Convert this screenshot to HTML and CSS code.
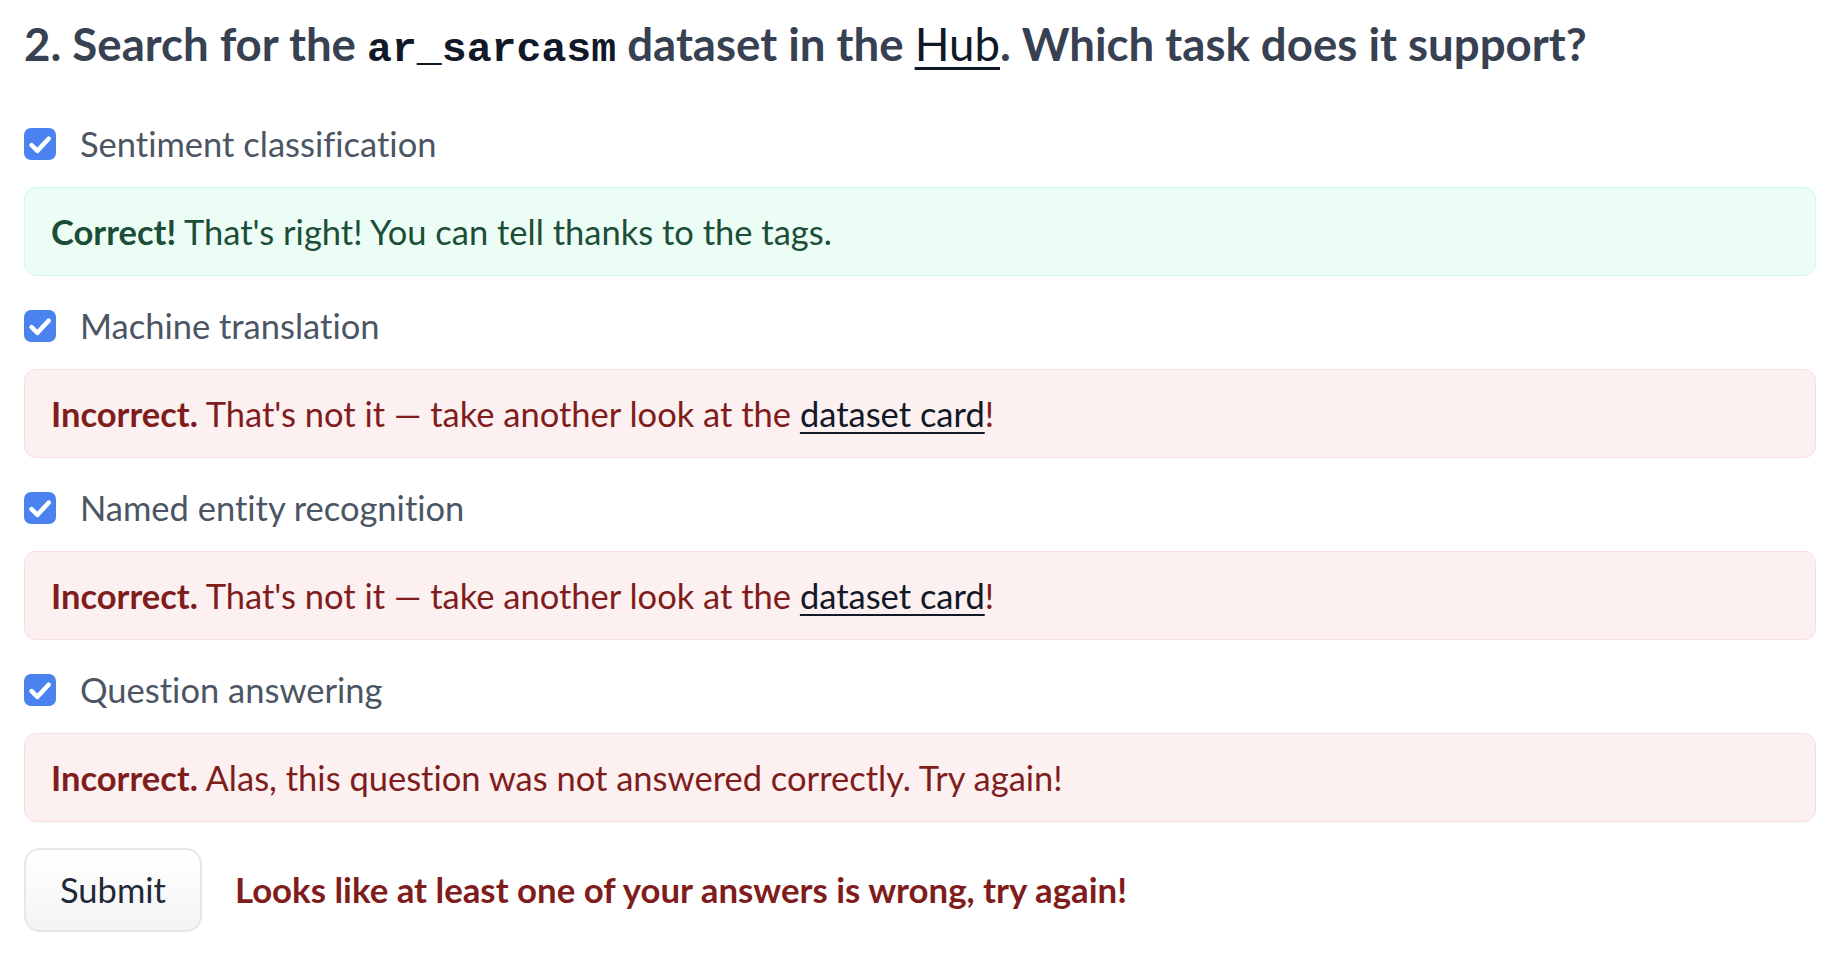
FILE: index.html
```html
<!DOCTYPE html>
<html lang="en">
<head>
<meta charset="utf-8">
<title>Quiz</title>
<link rel="stylesheet" href="styles.css">
</head>
<body>
<div class="page">
  <h2 class="question">2. Search for the <code>ar_sarcasm</code> dataset in the <a href="#" class="hub">Hub</a>. Which task does it support?</h2>

  <div class="option">
    <span class="check"><svg viewBox="0 0 16 16" width="32" height="32"><path d="M3.8 8.6 L6.7 11.4 L12.3 5.4" fill="none" stroke="#fff" stroke-width="2.3" stroke-linecap="round" stroke-linejoin="round"/></svg></span>
    <span class="label">Sentiment classification</span>
  </div>
  <div class="feedback ok"><strong>Correct!</strong> That's right! You can tell thanks to the tags.</div>

  <div class="option">
    <span class="check"><svg viewBox="0 0 16 16" width="32" height="32"><path d="M3.8 8.6 L6.7 11.4 L12.3 5.4" fill="none" stroke="#fff" stroke-width="2.3" stroke-linecap="round" stroke-linejoin="round"/></svg></span>
    <span class="label">Machine translation</span>
  </div>
  <div class="feedback bad"><strong>Incorrect.</strong> That's not it — take another look at the <a href="#" class="link">dataset card</a>!</div>

  <div class="option">
    <span class="check"><svg viewBox="0 0 16 16" width="32" height="32"><path d="M3.8 8.6 L6.7 11.4 L12.3 5.4" fill="none" stroke="#fff" stroke-width="2.3" stroke-linecap="round" stroke-linejoin="round"/></svg></span>
    <span class="label">Named entity recognition</span>
  </div>
  <div class="feedback bad"><strong>Incorrect.</strong> That's not it — take another look at the <a href="#" class="link">dataset card</a>!</div>

  <div class="option">
    <span class="check"><svg viewBox="0 0 16 16" width="32" height="32"><path d="M3.8 8.6 L6.7 11.4 L12.3 5.4" fill="none" stroke="#fff" stroke-width="2.3" stroke-linecap="round" stroke-linejoin="round"/></svg></span>
    <span class="label">Question answering</span>
  </div>
  <div class="feedback bad"><strong>Incorrect.</strong> Alas, this question was not answered correctly. Try again!</div>

  <div class="actions">
    <button class="submit" type="button">Submit</button>
    <span class="result">Looks like at least one of your answers is wrong, try again!</span>
  </div>
</div>
</body>
</html>
```

FILE: styles.css
```css
html, body {
  margin: 0;
  padding: 0;
  background: #ffffff;
}

.page {
  padding: 12px 24px 0 24px;
  font-family: "Lato", "Noto Sans", sans-serif;
  font-size: 34.5px;
  line-height: 54px;
  font-variant-ligatures: no-common-ligatures no-discretionary-ligatures;
}

.question {
  margin: 0 0 35px 0;
  font-size: 45.6px;
  line-height: 64px;
  font-weight: 700;
  color: #374151;
}

.question code {
  font-family: "Liberation Mono", "DejaVu Sans Mono", monospace;
  font-weight: 700;
  font-size: 41.5px;
  color: #111827;
}

.hub {
  color: #111827;
  font-weight: 400;
  text-decoration: underline;
  text-decoration-thickness: 3px;
  text-underline-offset: 6px;
}

.option {
  display: flex;
  align-items: center;
  gap: 24px;
  height: 54px;
}

.check {
  width: 32px;
  height: 32px;
  border-radius: 7px;
  background: #4a83ef;
  display: flex;
  flex-shrink: 0;
}

.label {
  color: #4b5563;
}

.feedback {
  margin: 16px 0 23px 0;
  border: 1px solid;
  border-radius: 12px;
  padding: 16px 26px;
  line-height: 55px;
}

.feedback.ok {
  background: #ecfdf5;
  border-color: #d1fae5;
  color: #1b4d38;
}

.feedback.bad {
  background: #fcf0f0;
  border-color: #f9dede;
  color: #7f1d1d;
}

.link {
  color: #111827;
  text-decoration: underline;
  text-decoration-thickness: 2px;
  text-underline-offset: 5px;
}

.actions {
  display: flex;
  align-items: center;
  gap: 33px;
  margin-top: 26px;
}

.submit {
  font-family: inherit;
  font-size: 34.5px;
  line-height: 54px;
  color: #1f2937;
  padding: 13px 34px;
  border: 2px solid #e5e7eb;
  border-radius: 16px;
  background: linear-gradient(to bottom, #ffffff, #f3f4f6);
}

.result {
  font-weight: 700;
  font-size: 34.8px;
  color: #7f1d1d;
}
```
